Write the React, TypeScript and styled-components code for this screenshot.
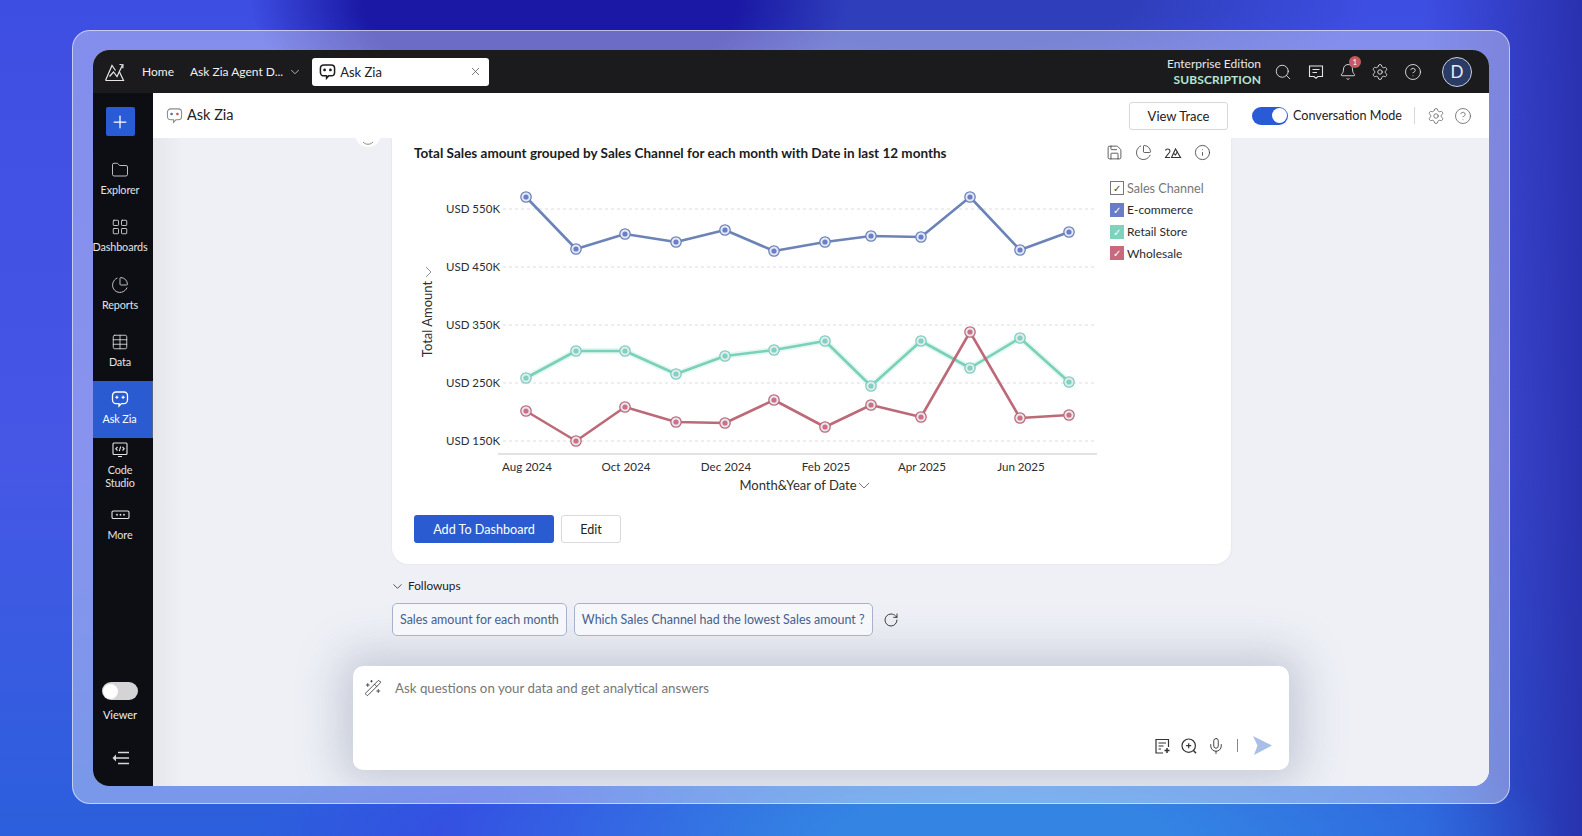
import React from "react";
import styled, { createGlobalStyle } from "styled-components";
import {
  Bell,
  ChartPie,
  ChevronDown,
  CircleHelp,
  Folder,
  Info,
  LayoutGrid,
  Mic,
  Plus,
  RotateCw,
  Save,
  Search,
  Settings,
  Table,
  WandSparkles,
  X,
} from "lucide-react";

const GlobalStyle = createGlobalStyle`
  html, body { margin: 0; padding: 0; }
  body {
    width: 1582px;
    height: 836px;
    overflow: hidden;
    font-family: Lato, "Liberation Sans", sans-serif;
    color: #222;
  }
`;

const Page = styled.div`
  width: 1582px;
  height: 836px;
  box-sizing: border-box;
  padding: 30px 72px;
  background:
    radial-gradient(ellipse 300px 150px at 550px 0, #1a18a4 62%, rgba(26, 24, 164, 0) 100%),
    radial-gradient(ellipse 420px 110px at 950px 0, #2f3fbc 45%, rgba(47, 63, 188, 0) 100%),
    radial-gradient(ellipse 560px 140px at 1000px 836px, #3484e4 30%, rgba(52, 132, 228, 0) 100%),
    radial-gradient(ellipse 300px 90px at 560px 836px, #3450e2 40%, rgba(52, 80, 226, 0) 100%),
    linear-gradient(90deg, rgba(40, 46, 170, 0) 90%, rgba(40, 46, 170, 0.9) 100%),
    linear-gradient(180deg, #3d4ee2 0%, #4657e6 55%, #2b5fdc 100%);
`;

const Frame = styled.div`
  width: 1438px;
  height: 774px;
  box-sizing: border-box;
  padding: 19px 20px;
  border-radius: 18px;
  border: 1px solid rgba(255, 255, 255, 0.55);
  background: rgba(255, 255, 255, 0.36);
`;

const Win = styled.div`
  height: 736px;
  border-radius: 16px;
  overflow: hidden;
  display: flex;
  flex-direction: column;
  background: #eef0f6;
`;

const TopBar = styled.header`
  height: 43px;
  flex: none;
  display: flex;
  align-items: center;
  background: #1b1b1e;
  color: #f0f0f0;
  font-size: 12px;
  padding-left: 11px;
`;

const TopLink = styled.span`
  margin-left: ${(p: { $gap: number }) => p.$gap}px;
  white-space: nowrap;
`;

const TopChevron = styled.span`
  display: flex;
  margin-left: 5px;
`;

const Tab = styled.div`
  width: 177px;
  height: 28px;
  margin-left: 10px;
  box-sizing: border-box;
  padding: 0 7px;
  display: flex;
  align-items: center;
  gap: 4px;
  background: #fff;
  border-radius: 3px;
  color: #222;
  font-size: 13px;
`;

const TabClose = styled.span`
  margin-left: auto;
  display: flex;
  color: #555;
  padding-right: 0;
`;

const TopRight = styled.div`
  margin-left: auto;
  display: flex;
  align-items: center;
  padding-right: 17px;
`;

const Edition = styled.div`
  text-align: right;
  font-size: 12px;
  line-height: 16px;
  margin-right: 6px;
  color: #e8e8e8;
`;

const Subscription = styled.div`
  font-weight: 700;
  color: #b4e6d2;
  letter-spacing: 0.1px;
`;

const TopIcon = styled.span`
  position: relative;
  width: 32.4px;
  display: flex;
  justify-content: center;
  color: #e4e4e4;
`;

const Badge = styled.span`
  position: absolute;
  top: -7px;
  left: 17px;
  width: 12px;
  height: 12px;
  border-radius: 50%;
  background: #c4595f;
  color: #fff;
  font-size: 8px;
  line-height: 12px;
  text-align: center;
`;

const Avatar = styled.div`
  width: 28px;
  height: 28px;
  margin-left: 13px;
  border-radius: 50%;
  border: 1px solid #c9cfe0;
  background: #2a3c66;
  color: #e8ecf8;
  font-size: 17px;
  display: flex;
  align-items: center;
  justify-content: center;
`;

const Body = styled.div`
  flex: 1;
  min-height: 0;
  display: flex;
`;

const Sidebar = styled.nav`
  width: 60px;
  flex: none;
  display: flex;
  flex-direction: column;
  align-items: center;
  background: #0d0e13;
  color: #eee;
  padding-top: 14px;
  box-sizing: border-box;
`;

const PlusButton = styled.button`
  width: 29px;
  height: 29px;
  flex: none;
  margin: 0 6px 16px 0;
  border: 0;
  border-radius: 2px;
  padding: 0;
  background: #2a5bd6;
  color: #fff;
  display: flex;
  align-items: center;
  justify-content: center;
`;

const NavItem = styled.div<{ $active?: boolean; $compact?: boolean; $h: number }>`
  width: 100%;
  height: ${(p) => p.$h}px;
  flex: none;
  box-sizing: border-box;
  padding: ${(p) => (p.$compact ? 3 : 9)}px 6px 0 0;
  display: flex;
  flex-direction: column;
  align-items: center;
  background: ${(p) => (p.$active ? "#2a5bd0" : "transparent")};
  color: ${(p) => (p.$active ? "#fff" : "#e4e4e4")};
  border-right: ${(p) => (p.$active ? "1px solid #55678f" : "0")};
`;

const NavLabel = styled.span`
  margin-top: 4px;
  font-size: 10.8px;
  line-height: 13px;
  letter-spacing: -0.1px;
  text-align: center;
  white-space: pre;
`;

const SideFoot = styled.div`
  margin: auto 6px 0 0;
  padding-bottom: 21px;
  display: flex;
  flex-direction: column;
  align-items: center;
`;

const ViewerToggle = styled.div`
  width: 36px;
  height: 18px;
  border-radius: 9px;
  background: #d4d4d6;
  display: flex;
  align-items: center;
`;

const ViewerKnob = styled.span`
  width: 15px;
  height: 15px;
  margin-left: 1px;
  border-radius: 50%;
  background: #fff;
`;

const ViewerLabel = styled.span`
  margin-top: 8px;
  margin-bottom: 29px;
  font-size: 11px;
  line-height: 14px;
`;

const Main = styled.main`
  flex: 1;
  min-width: 0;
  display: flex;
  flex-direction: column;
  background: linear-gradient(90deg, #e4e6ea 0, #eef0f6 30px);
`;

const Header = styled.div`
  height: 45px;
  flex: none;
  display: flex;
  align-items: center;
  background: #fff;
  padding: 0 17px 0 13px;
`;

const Title = styled.h1`
  margin: 0 0 2px 4px;
  font-size: 14.5px;
  font-weight: 400;
  color: #222;
`;

const TraceButton = styled.button`
  width: 99px;
  height: 28px;
  margin-left: auto;
  background: #fff;
  border: 1px solid #d6d8de;
  border-radius: 3px;
  font: 400 13px Lato, sans-serif;
  color: #222;
`;

const ModeSwitch = styled.div`
  width: 36px;
  height: 18px;
  margin-left: 24px;
  border-radius: 9px;
  background: #2a5bd6;
  display: flex;
  align-items: center;
  justify-content: flex-end;
`;

const ModeKnob = styled.span`
  width: 15px;
  height: 15px;
  margin-right: 1.5px;
  border-radius: 50%;
  background: #fff;
`;

const ModeLabel = styled.span`
  margin-left: 5px;
  font-size: 12.6px;
  white-space: nowrap;
`;

const HeaderRule = styled.span`
  width: 1px;
  height: 17px;
  margin: 0 12px;
  background: #d8d8d8;
`;

const HeaderIcon = styled.span`
  display: flex;
  color: #666;
  margin-left: ${(p: { $gap?: number }) => p.$gap ?? 0}px;
`;

const Thread = styled.div`
  position: relative;
  flex: 1;
  min-height: 0;
  overflow: hidden;
  padding-left: 239px;
`;

const AgentDot = styled.div`
  position: absolute;
  left: 202px;
  top: -17px;
  width: 26px;
  height: 26px;
  border-radius: 50%;
  background: #fff;
  display: flex;
  align-items: flex-end;
  justify-content: center;
  color: #888;
`;

const Card = styled.section`
  width: 839px;
  height: 426px;
  box-sizing: border-box;
  padding: 0 22px;
  background: #fff;
  border-radius: 0 0 16px 16px;
  box-shadow: 0 0 2px rgba(120, 130, 160, 0.18);
`;

const CardHead = styled.div`
  height: 30px;
  display: flex;
  align-items: center;
`;

const CardTitle = styled.h2`
  margin: 0;
  font-size: 13.5px;
  font-weight: 700;
  color: #1c1c1c;
  white-space: nowrap;
`;

const CardTools = styled.div`
  margin-left: auto;
  margin-right: -2px;
  display: flex;
  gap: 12px;
  color: #333;
`;

const ChartRow = styled.div`
  display: flex;
  height: 330px;
  margin-top: 2px;
`;

const ChartSvg = styled.svg`
  flex: none;
  font-family: Lato, "Liberation Sans", sans-serif;
`;

const Legend = styled.ul`
  list-style: none;
  margin: 11px 0 0 6px;
  padding: 0;
  display: flex;
  flex-direction: column;
  gap: 7.8px;
`;

const LegendRow = styled.li<{ $muted?: boolean }>`
  display: flex;
  align-items: center;
  gap: 3px;
  height: 14px;
  white-space: nowrap;
  font-size: ${(p) => (p.$muted ? 12.6 : 12)}px;
  color: ${(p) => (p.$muted ? "#777" : "#2a2a2a")};
`;

const LegendBox = styled.span<{ $color?: string }>`
  width: 14px;
  height: 14px;
  box-sizing: border-box;
  display: flex;
  align-items: center;
  justify-content: center;
  font-size: 10px;
  line-height: 1;
  background: ${(p) => p.$color ?? "#fff"};
  border: ${(p) => (p.$color ? "0" : "1px solid #777")};
  color: ${(p) => (p.$color ? "#fff" : "#444")};
`;

const Actions = styled.div`
  display: flex;
  gap: 7px;
  margin-top: 15px;
`;

const PrimaryButton = styled.button`
  width: 140px;
  height: 28px;
  border: 0;
  border-radius: 3px;
  background: #2a5bd0;
  color: #fff;
  font: 400 12.6px Lato, sans-serif;
`;

const GhostButton = styled.button`
  width: 60px;
  height: 28px;
  border: 1px solid #d8dae0;
  border-radius: 3px;
  background: #fff;
  color: #222;
  font: 400 12.6px Lato, sans-serif;
`;

const Followups = styled.div`
  margin-top: 14px;
  margin-left: -2px;
  display: flex;
  align-items: center;
  gap: 3px;
  font-size: 11.8px;
  line-height: 16px;
  color: #222;
`;

const ChipRow = styled.div`
  margin-top: 9px;
  display: flex;
  align-items: center;
  gap: 7px;
`;

const Chip = styled.button`
  height: 33px;
  padding: 0 7px;
  border: 1px solid #a8b2ca;
  border-radius: 5px;
  background: #f5f7fb;
  color: #46608c;
  font: 400 12.45px Lato, sans-serif;
  white-space: nowrap;
`;

const Refresh = styled.span`
  display: flex;
  margin-left: 3px;
  color: #222;
`;

const Composer = styled.div`
  flex: none;
  width: 936px;
  height: 104px;
  margin: 0 0 16px 200px;
  box-sizing: border-box;
  padding: 12px 16px 14px 11px;
  display: flex;
  flex-direction: column;
  background: #fff;
  border-radius: 10px;
  box-shadow: 0 0 42px 14px rgba(130, 140, 165, 0.36);
`;

const Prompt = styled.div`
  display: flex;
  align-items: center;
  gap: 13px;
  color: #777;
  font-size: 13.3px;
  line-height: 20px;
`;

const PromptIcon = styled.span`
  display: flex;
  color: #333;
`;

const ComposerTools = styled.div`
  margin-top: auto;
  display: flex;
  align-items: center;
  justify-content: flex-end;
  gap: 9px;
  color: #333;
`;

const ToolRule = styled.span`
  width: 1px;
  height: 13px;
  margin: 0 5px 0 3px;
  background: #888;
`;

type IconProps = { size?: number; color?: string; weight?: number };

// speech bubble with two sparkle eyes, the Zia mark
const ZiaIcon = ({ size = 18, color = "currentColor", weight = 1.3 }: IconProps) => (
  <svg width={size} height={size} viewBox="0 0 18 18" fill="none">
    <path
      d="M5 2h8a3.5 3.5 0 0 1 3.5 3.5v4.6a3.5 3.5 0 0 1-3.5 3.5h-2.6L8 16.2v-2.6H5a3.5 3.5 0 0 1-3.5-3.5V5.500A3.500 3.500 0 0 1 5 2z"
      stroke={color}
      strokeWidth={weight}
    />
    <path d="M5.900 5.800v3M4.400 7.300h3" stroke={color} strokeWidth={weight} />
    <path d="M12.100 5.800v3M10.600 7.300h3" stroke={color} strokeWidth={weight} />
  </svg>
);

const HeaderZia = () => (
  <svg width="17" height="17" viewBox="0 0 18 18" fill="none">
    <path
      d="M5 2h8a3.5 3.5 0 0 1 3.5 3.5v4.600a3.500 3.500 0 0 1-3.500 3.500h-2.600L8 16.200v-2.600H5a3.500 3.500 0 0 1-3.500-3.500V5.500A3.500 3.500 0 0 1 5 2z"
      stroke="#8a8a8a"
      strokeWidth="1.100"
    />
    <path d="M5.900 6v2.800M4.500 7.400h2.800" stroke="#4a6fc4" strokeWidth="1.400" />
    <path d="M12.100 6v2.800M10.700 7.400h2.800" stroke="#c9515a" strokeWidth="1.400" />
  </svg>
);

const Logo = () => (
  <svg width="21" height="21" viewBox="0 0 21 21" fill="none" stroke="#e6e6e6" strokeWidth="1.200">
    <path d="M1.500 19.500 8 4.500l3.500 5M1.500 19.500h18L15.500 11" />
    <path d="M5.500 15.500 9.500 11l3.500 4.500L18.500 4" />
    <path d="M15.500 3.500l3.500.2-.2 3.500" />
  </svg>
);

const InboxIcon = () => (
  <svg width="18" height="18" viewBox="0 0 18 18" fill="none" stroke="currentColor" strokeWidth="1.100">
    <path d="M2.500 3h13v10.500H11l-2 1.700-2-1.700H2.500z" />
    <path d="M5.500 6.500h7M5.500 9.500h4.500" />
  </svg>
);

const CodeIcon = () => (
  <svg width="18" height="18" viewBox="0 0 18 18" fill="none" stroke="currentColor" strokeWidth="1.100">
    <rect x="2" y="2" width="14" height="11.500" rx="1" />
    <path d="M6.500 6 4.800 7.800l1.700 1.700M11.500 6l1.700 1.800-1.700 1.700M9.700 5.500l-1.400 4.600M7 15.500h4" />
  </svg>
);

const MoreIcon = () => (
  <svg width="19" height="18" viewBox="0 0 19 18" fill="none">
    <rect x="1" y="5" width="17" height="7.500" rx="1.300" stroke="currentColor" strokeWidth="1.100" />
    <circle cx="6" cy="8.750" r="0.900" fill="currentColor" />
    <circle cx="9.500" cy="8.750" r="0.900" fill="currentColor" />
    <circle cx="13" cy="8.750" r="0.900" fill="currentColor" />
  </svg>
);

const CollapseIcon = () => (
  <svg width="19" height="14" viewBox="0 0 19 14" fill="none" stroke="#d8d8d8" strokeWidth="1.300">
    <path d="M7 1.500h11M4 7h14M7 12.500h11" />
    <path d="M5 3.500 1.500 7 5 10.500" fill="#d8d8d8" stroke="none" />
  </svg>
);

const ChartToolIcon = () => (
  <svg width="18" height="18" viewBox="0 0 18 18" fill="none" stroke="currentColor" strokeWidth="1.100">
    <path d="M1.500 6.500c.5-2 4.500-2 4.500.5 0 2-3.500 4-4.500 6.500H6" />
    <path d="M7.500 13.500 11.500 5l5 8.500z" />
    <path d="M9.500 9.500l2 1.500 2-3.500" />
  </svg>
);

const NoteSparkIcon = () => (
  <svg width="18" height="18" viewBox="0 0 18 18" fill="none" stroke="currentColor" strokeWidth="1.200">
    <path d="M10 16H3V2.500h12.500V10" />
    <path d="M5.500 6h7.500M5.500 9h5M5.500 12h2.500" />
    <path d="M14 11v5M11.500 13.500h5" strokeWidth="1.500" />
  </svg>
);

const ZoomChatIcon = () => (
  <svg width="18" height="18" viewBox="0 0 18 18" fill="none" stroke="currentColor" strokeWidth="1.200">
    <circle cx="8.700" cy="8.700" r="6.700" />
    <path d="M13.500 13.500 16 16.200" strokeWidth="1.500" />
    <path d="M8.700 6.200v5M6.200 8.700h5" />
  </svg>
);

const SendIcon = () => (
  <svg width="21" height="21" viewBox="0 0 21 21">
    <path d="M1 1l19 9.500L2 20l3.500-9.500z" fill="#a9bfe8" />
  </svg>
);

type Series = { color: string; dot: string; glow?: string; ys: number[] };

const XS = [526, 576, 625, 676, 725, 774, 825, 871, 921, 970, 1020, 1069];

const SERIES: Series[] = [
  { color: "#6c83b8", dot: "#6a7fcc", ys: [197, 249, 234, 242, 230, 251, 242, 236, 237, 197, 250, 232] },
  { color: "#7bd0b9", dot: "#7fd2bc", glow: "#e4f8f2", ys: [378, 351, 351, 374, 356, 350, 341, 386, 341, 368, 338, 382] },
  { color: "#bd6a78", dot: "#cf6f82", ys: [411, 441, 407, 422, 423, 400, 427, 405, 417, 332, 418, 415] },
];

const Y_TICKS = [
  { y: 209, label: "USD 550K" },
  { y: 267, label: "USD 450K" },
  { y: 325, label: "USD 350K" },
  { y: 383, label: "USD 250K" },
  { y: 441, label: "USD 150K" },
];

const X_TICKS = [
  { x: 527, label: "Aug 2024" },
  { x: 626, label: "Oct 2024" },
  { x: 726, label: "Dec 2024" },
  { x: 826, label: "Feb 2025" },
  { x: 922, label: "Apr 2025" },
  { x: 1021, label: "Jun 2025" },
];

const NAV = [
  { label: "Explorer", icon: <Folder size={18} strokeWidth={1.100} />, h: 57 },
  { label: "Dashboards", icon: <LayoutGrid size={18} strokeWidth={1.100} />, h: 57.5 },
  { label: "Reports", icon: <ChartPie size={18} strokeWidth={1.100} />, h: 57.5 },
  { label: "Data", icon: <Table size={18} strokeWidth={1.100} />, h: 57 },
  { label: "Ask Zia", icon: <ZiaIcon />, h: 57, active: true },
  { label: "Code\nStudio", icon: <CodeIcon />, h: 59, compact: true },
  { label: "More", icon: <MoreIcon />, h: 50 },
];

const LineChart = () => (
  <ChartSvg width="690" height="330" viewBox="414 170 690 330">
    {Y_TICKS.map((t) => (
      <g key={t.label}>
        <line x1="503" x2="1097" y1={t.y} y2={t.y} stroke="#dcdcdc" strokeWidth="1" strokeDasharray="3 3" />
        <text x="500" y={t.y + 4} textAnchor="end" fontSize="11.500" fill="#2e2e2e">
          {t.label}
        </text>
      </g>
    ))}
    <line x1="498" x2="1097" y1="454" y2="454" stroke="#d8d8d8" strokeWidth="1.500" />
    <text transform="translate(432 319) rotate(-90)" textAnchor="middle" fontSize="13" fill="#2e2e2e">
      Total Amount
    </text>
    <path d="M426 267l5 5-5 5" fill="none" stroke="#888" strokeWidth="0.900" />
    {X_TICKS.map((t) => (
      <text key={t.label} x={t.x} y="471" textAnchor="middle" fontSize="11.600" fill="#2e2e2e">
        {t.label}
      </text>
    ))}
    <text x="798" y="490" textAnchor="middle" fontSize="13" fill="#2e2e2e">
      Month&amp;Year of Date
    </text>
    <path d="M859 483l5 5 5-5" fill="none" stroke="#666" strokeWidth="0.900" />
    {SERIES.map((s) => {
      const pts = s.ys.map((y, i) => `${XS[i]},${y}`).join(" ");
      return (
        <g key={s.color}>
          {s.glow && <polyline points={pts} fill="none" stroke={s.glow} strokeWidth="6" />}
          <polyline points={pts} fill="none" stroke={s.color} strokeWidth="2.600" strokeLinejoin="round" />
          {s.ys.map((y, i) => (
            <g key={XS[i]}>
              <circle cx={XS[i]} cy={y} r="5.200" fill="#e6e9f4" stroke={s.color} strokeWidth="1.300" />
              <circle cx={XS[i]} cy={y} r="2.600" fill={s.dot} />
            </g>
          ))}
        </g>
      );
    })}
  </ChartSvg>
);

export default function App() {
  return (
    <Page>
      <GlobalStyle />
      <Frame>
        <Win>
          <TopBar>
            <Logo />
            <TopLink $gap={17}>Home</TopLink>
            <TopLink $gap={16}>Ask Zia Agent D...</TopLink>
            <TopChevron>
              <ChevronDown size={14} strokeWidth={1.200} />
            </TopChevron>
            <Tab>
              <ZiaIcon size={17} color="#1d1d1d" weight={1.600} />
              Ask Zia
              <TabClose>
                <X size={13} strokeWidth={1.400} />
              </TabClose>
            </Tab>
            <TopRight>
              <Edition>
                Enterprise Edition
                <Subscription>SUBSCRIPTION</Subscription>
              </Edition>
              <TopIcon>
                <Search size={18} strokeWidth={1.200} />
              </TopIcon>
              <TopIcon>
                <InboxIcon />
              </TopIcon>
              <TopIcon>
                <Bell size={18} strokeWidth={1.200} />
                <Badge>1</Badge>
              </TopIcon>
              <TopIcon>
                <Settings size={18} strokeWidth={1.200} />
              </TopIcon>
              <TopIcon>
                <CircleHelp size={18} strokeWidth={1.200} />
              </TopIcon>
              <Avatar>D</Avatar>
            </TopRight>
          </TopBar>
          <Body>
            <Sidebar>
              <PlusButton>
                <Plus size={20} strokeWidth={1.500} />
              </PlusButton>
              {NAV.map((n) => (
                <NavItem key={n.label} $h={n.h} $active={n.active} $compact={n.compact}>
                  {n.icon}
                  <NavLabel>{n.label}</NavLabel>
                </NavItem>
              ))}
              <SideFoot>
                <ViewerToggle>
                  <ViewerKnob />
                </ViewerToggle>
                <ViewerLabel>Viewer</ViewerLabel>
                <CollapseIcon />
              </SideFoot>
            </Sidebar>
            <Main>
              <Header>
                <HeaderZia />
                <Title>Ask Zia</Title>
                <TraceButton>View Trace</TraceButton>
                <ModeSwitch>
                  <ModeKnob />
                </ModeSwitch>
                <ModeLabel>Conversation Mode</ModeLabel>
                <HeaderRule />
                <HeaderIcon>
                  <Settings size={18} strokeWidth={1.100} />
                </HeaderIcon>
                <HeaderIcon $gap={9}>
                  <CircleHelp size={18} strokeWidth={1.100} />
                </HeaderIcon>
              </Header>
              <Thread>
                <AgentDot>
                  <svg width="12" height="6" viewBox="0 0 12 6" fill="none" stroke="currentColor">
                    <path d="M1 1c3 3 7 3 10 0" />
                  </svg>
                </AgentDot>
                <Card>
                  <CardHead>
                    <CardTitle>Total Sales amount grouped by Sales Channel for each month with Date in last 12 months</CardTitle>
                    <CardTools>
                      <Save size={17} strokeWidth={1.100} />
                      <ChartPie size={17} strokeWidth={1.100} />
                      <ChartToolIcon />
                      <Info size={17} strokeWidth={1.100} />
                    </CardTools>
                  </CardHead>
                  <ChartRow>
                    <LineChart />
                    <Legend>
                      <LegendRow $muted>
                        <LegendBox>✓</LegendBox>Sales Channel
                      </LegendRow>
                      <LegendRow>
                        <LegendBox $color="#6a7bc8">✓</LegendBox>E-commerce
                      </LegendRow>
                      <LegendRow>
                        <LegendBox $color="#7fd2bc">✓</LegendBox>Retail Store
                      </LegendRow>
                      <LegendRow>
                        <LegendBox $color="#c96a7c">✓</LegendBox>Wholesale
                      </LegendRow>
                    </Legend>
                  </ChartRow>
                  <Actions>
                    <PrimaryButton>Add To Dashboard</PrimaryButton>
                    <GhostButton>Edit</GhostButton>
                  </Actions>
                </Card>
                <Followups>
                  <ChevronDown size={15} strokeWidth={1.200} />
                  Followups
                </Followups>
                <ChipRow>
                  <Chip>Sales amount for each month</Chip>
                  <Chip>Which Sales Channel had the lowest Sales amount ?</Chip>
                  <Refresh>
                    <RotateCw size={16} strokeWidth={1.300} />
                  </Refresh>
                </ChipRow>
              </Thread>
              <Composer>
                <Prompt>
                  <PromptIcon>
                    <WandSparkles size={18} strokeWidth={1.100} />
                  </PromptIcon>
                  Ask questions on your data and get analytical answers
                </Prompt>
                <ComposerTools>
                  <NoteSparkIcon />
                  <ZoomChatIcon />
                  <Mic size={18} strokeWidth={1.200} />
                  <ToolRule />
                  <SendIcon />
                </ComposerTools>
              </Composer>
            </Main>
          </Body>
        </Win>
      </Frame>
    </Page>
  );
}
